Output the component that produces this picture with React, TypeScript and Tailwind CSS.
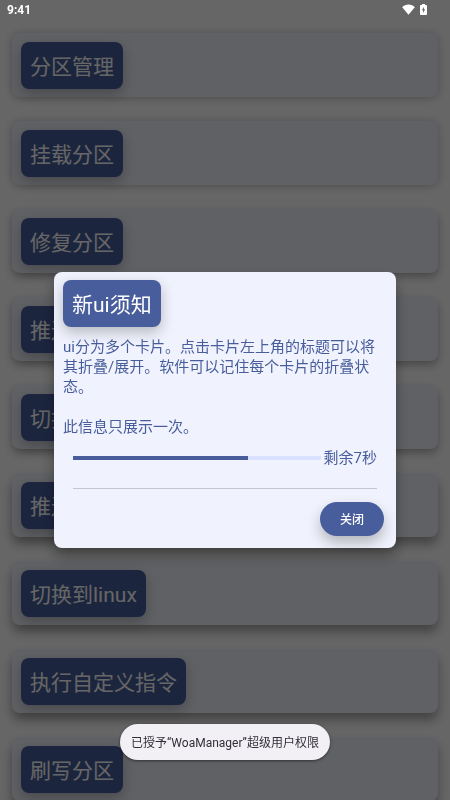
import { useState } from "react";
import { cva } from "class-variance-authority";

const titles = [
  "分区管理",
  "挂载分区",
  "修复分区",
  "推送",
  "切换",
  "推送",
  "切换到linux",
  "执行自定义指令",
  "刷写分区",
];

const card = cva("rounded-lg bg-[#f0f3fd] px-[9px] pt-[9px] pb-2", {
  variants: {
    depth: {
      near: "shadow-[0_1px_8px_rgba(0,0,0,0.25)]",
      middle: "shadow-[0_4px_9px_rgba(0,0,0,0.3)]",
      far: "shadow-[0_7px_11px_rgba(0,0,0,0.35)]",
    },
  },
});

function depthOf(index: number) {
  if (index < 2) return "near";
  if (index < 5) return "middle";
  return "far";
}

function Chip({ title, onClick }: { title: string; onClick?: () => void }) {
  return (
    <button
      onClick={onClick}
      className="block rounded-lg bg-[#485d9b] px-[9px] pt-[11px] pb-2 text-[21px] leading-7 text-white shadow-[0_5px_14px_rgba(0,0,0,0.25)]"
    >
      {title}
    </button>
  );
}

function StatusBar() {
  return (
    <div className="fixed inset-x-0 top-0 z-30 flex h-5 items-center justify-between pr-[23px] pl-[7px] text-white">
      <span className="text-xs font-bold">9:41</span>
      <div className="flex items-center gap-[5px] pb-[2px]">
        <svg width="13" height="11" viewBox="0 0 13 11" fill="currentColor">
          <path d="M6.5 10.7 0.2 3.2C1.8 1.5 4 0.6 6.5 0.6S11.2 1.5 12.8 3.2z" />
        </svg>
        <svg width="7" height="11" viewBox="0 0 7 11">
          <path
            fill="currentColor"
            d="M2 0h3v1h1.2c.4 0 .8.4.8.8v8.4c0 .4-.4.8-.8.8H.8c-.4 0-.8-.4-.8-.8V1.800C0 1.400.4 1 .8 1H2z"
          />
          <path fill="#666666" d="M3.900 2.700 1.900 6.300h1.200v2.600l2-3.700H3.900z" />
        </svg>
      </div>
    </div>
  );
}

function Dialog({ onClose }: { onClose: () => void }) {
  const [seconds] = useState(7);

  return (
    <div className="fixed inset-0 z-10 flex items-center justify-center bg-black/60 pt-5">
      <div
        role="dialog"
        aria-label="新ui须知"
        className="w-[76%] rounded-lg bg-[#f0f3fd] px-[9px] pt-2 pb-3 shadow-[0_8px_14px_rgba(0,0,0,0.35)]"
      >
        <Chip title="新ui须知" />
        <div className="mt-[10px] pr-2 text-[15px] leading-5 text-[#485d9b]">
          <p>
            ui分为多个卡片。点击卡片左上角的标题可以将其折叠/展开。软件可以记住每个卡片的折叠状态。
          </p>
          <p className="mt-5">此信息只展示一次。</p>
        </div>
        <div className="px-[10px]">
          <label className="mt-[11px] flex items-center gap-[3px] text-[15px] leading-5 text-[#485d9b]">
            <progress
              value={17 - seconds + 0.6}
              max={15}
              className="h-1 min-w-0 flex-1 appearance-none [&::-webkit-progress-bar]:bg-[#d9e1ff] [&::-webkit-progress-value]:bg-[#485d9b]"
            />
            <span>剩余{seconds}秒</span>
          </label>
          <hr className="mt-5 border-[#c5c6d0]" />
        </div>
        <div className="mt-[13px] flex justify-end pr-[3px]">
          <button
            onClick={onClose}
            className="h-[34px] rounded-full bg-[#485d9b] px-5 pt-[2px] text-xs font-medium text-white shadow-[0_7px_14px_rgba(0,0,0,0.25)]"
          >
            关闭
          </button>
        </div>
      </div>
    </div>
  );
}

function App() {
  const [open, setOpen] = useState(true);

  return (
    <div className="h-screen overflow-hidden bg-white font-[Roboto,'Noto_Sans_CJK_SC',sans-serif]">
      <StatusBar />
      <main className="flex flex-col gap-6 px-[12px] pt-[33px]">
        {titles.map((title, index) => (
          <section
            key={"card-" + index}
            className={card({ depth: depthOf(index) })}
          >
            <Chip title={title} />
          </section>
        ))}
      </main>

      {open && <Dialog onClose={() => setOpen(false)} />}

      <div className="fixed inset-x-0 bottom-10 z-20 flex justify-center">
        <div
          role="status"
          className="flex h-9 items-center rounded-full bg-[#f2eff5] px-[11px] pt-[2px] text-xs text-[#303036] shadow-[0_1px_3px_rgba(0,0,0,0.5)]"
        >
          已授予“WoaManager”超级用户权限
        </div>
      </div>
    </div>
  );
}

export default App;
